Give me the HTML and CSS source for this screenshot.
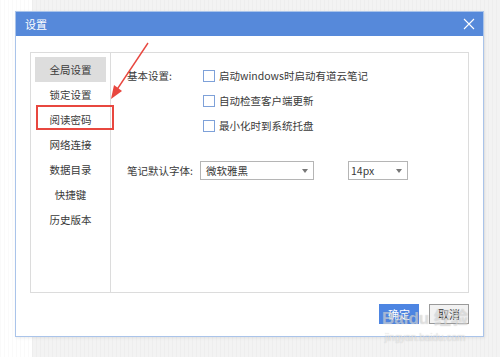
FILE: index.html
```html
<!DOCTYPE html>
<html lang="zh-CN">
<head>
    <meta charset="UTF-8">
    <title>设置</title>
    <link rel="stylesheet" href="styles.css">
</head>
<body>
    <div class="dialog">
        <div class="titlebar">
            <span class="title">设置</span>
            <svg class="close" width="12" height="12" viewBox="0 0 12 12">
                <path d="M1 1 L11 11 M11 1 L1 11" stroke="#fff" stroke-width="1.1" fill="none"/>
            </svg>
        </div>

        <div class="dialog-body">
            <div class="panel">
                <ul class="sidebar">
                    <li class="active">全局设置</li>
                    <li>锁定设置</li>
                    <li>阅读密码</li>
                    <li>网络连接</li>
                    <li>数据目录</li>
                    <li>快捷键</li>
                    <li>历史版本</li>
                </ul>

                <div class="content">
                    <div class="row">
                        <span class="label">基本设置:</span>
                        <label class="check"><span class="box"></span>启动windows时启动有道云笔记</label>
                    </div>
                    <div class="row">
                        <span class="label"></span>
                        <label class="check"><span class="box"></span>自动检查客户端更新</label>
                    </div>
                    <div class="row">
                        <span class="label"></span>
                        <label class="check"><span class="box"></span>最小化时到系统托盘</label>
                    </div>

                    <div class="row font-row">
                        <span class="label">笔记默认字体:</span>
                        <div class="select select-font">微软雅黑<span class="caret"></span></div>
                        <div class="select select-size">14px<span class="caret"></span></div>
                    </div>
                </div>
            </div>

            <div class="footer">
                <button class="btn btn-primary">确定</button>
                <button class="btn">取消</button>
            </div>
        </div>

        <!-- 标注 -->
        <div class="highlight"></div>
        <svg class="pointer" width="60" height="70" viewBox="0 0 60 70">
            <line x1="47" y1="2" x2="15" y2="50" stroke="#e8473f" stroke-width="1.4"/>
            <polygon points="10,58 13,44 21,50" fill="#e8473f"/>
        </svg>

        <div class="watermark">
            <span class="wm-big">Baidu 经验</span>
            <span class="wm-small">jingyan.baidu.com</span>
        </div>
    </div>
</body>
</html>
```

FILE: styles.css
```css
html, body {
    margin: 0;
    padding: 0;
}
body {
    width: 500px;
    height: 357px;
    overflow: hidden;
    font-family: "Noto Sans CJK SC", "Liberation Sans", sans-serif;
    font-size: 10.5px;
    color: #3a3a3a;
    background:
        repeating-linear-gradient(90deg, rgba(0,0,0,0.018) 0 1px, transparent 1px 4px),
        linear-gradient(90deg, #fff 0 32px, #f3f3f3 32px);
}
.dialog {
    position: relative;
    margin: 11px 0 0 15px;
    width: 467px;
    height: 324px;
    background: #fff;
    border: 1px solid #aac4ea;
    box-shadow: 1px 1px 3px rgba(0, 0, 0, 0.08);
}
.titlebar {
    height: 24px;
    background-color: #5689da;
    display: flex;
    align-items: center;
    justify-content: space-between;
    padding: 0 8px 0 9px;
    color: #fff;
}
.title {
    font-size: 11px;
}
.close {
    display: block;
}
.dialog-body {
    padding: 16px 14px 0 14px;
}
.panel {
    display: flex;
    height: 239px;
    border: 1px solid #dcdcdc;
}
.sidebar {
    list-style: none;
    margin: 0;
    padding: 4px 4px 0 4px;
    width: 71px;
    border-right: 1px solid #dcdcdc;
}
.sidebar li {
    height: 25px;
    line-height: 25px;
    text-align: center;
}
.sidebar li.active {
    background-color: #dddddd;
}
.content {
    flex: 1;
    padding: 10px 0 0 16px;
}
.row {
    display: flex;
    align-items: center;
    height: 25px;
    white-space: nowrap;
}
.label {
    width: 73px;
    flex: none;
}
.check {
    display: flex;
    align-items: center;
}
.box {
    width: 10px;
    height: 10px;
    border: 1px solid #7ea1d9;
    margin: 0 4px 0 3px;
}
.font-row {
    margin-top: 20px;
}
.select {
    position: relative;
    line-height: 17px;
    border: 1px solid #b5b5b5;
    padding-left: 5px;
    box-sizing: border-box;
    height: 19px;
}
.select-font {
    width: 114px;
}
.select-size {
    width: 60px;
    margin-left: 34px;
    padding-left: 2px;
}
.caret {
    position: absolute;
    right: 5px;
    top: 7px;
    border-left: 3px solid transparent;
    border-right: 3px solid transparent;
    border-top: 4px solid #777;
}
.footer {
    display: flex;
    justify-content: flex-end;
    gap: 10px;
    margin-top: 11px;
}
.btn {
    width: 40px;
    height: 20px;
    padding: 0;
    font-family: inherit;
    font-size: 11px;
    color: #333;
    background: #f2f2f2;
    border: 1px solid #9a9a9a;
}
.btn-primary {
    background-color: #4d85e2;
    border-color: #4d85e2;
    color: #fff;
}
.highlight {
    position: absolute;
    left: 20px;
    top: 93px;
    width: 74px;
    height: 21px;
    border: 2px solid #e8473f;
}
.pointer {
    position: absolute;
    left: 85px;
    top: 29px;
}
.watermark {
    position: absolute;
    left: 366px;
    top: 298px;
    display: flex;
    flex-direction: column;
    align-items: center;
    line-height: 1.1;
    white-space: nowrap;
    pointer-events: none;
}
.wm-big {
    font-family: "Liberation Sans", "Noto Sans CJK SC", sans-serif;
    font-size: 17px;
    font-weight: bold;
    color: rgba(255, 255, 255, 0.45);
    text-shadow: 0 0 1px rgba(120, 120, 120, 0.45);
}
.wm-small {
    margin-top: 3px;
    font-family: "Liberation Sans", sans-serif;
    font-size: 10px;
    color: rgba(255, 255, 255, 0.5);
    text-shadow: 0 0 1px rgba(120, 120, 120, 0.4);
}
```
